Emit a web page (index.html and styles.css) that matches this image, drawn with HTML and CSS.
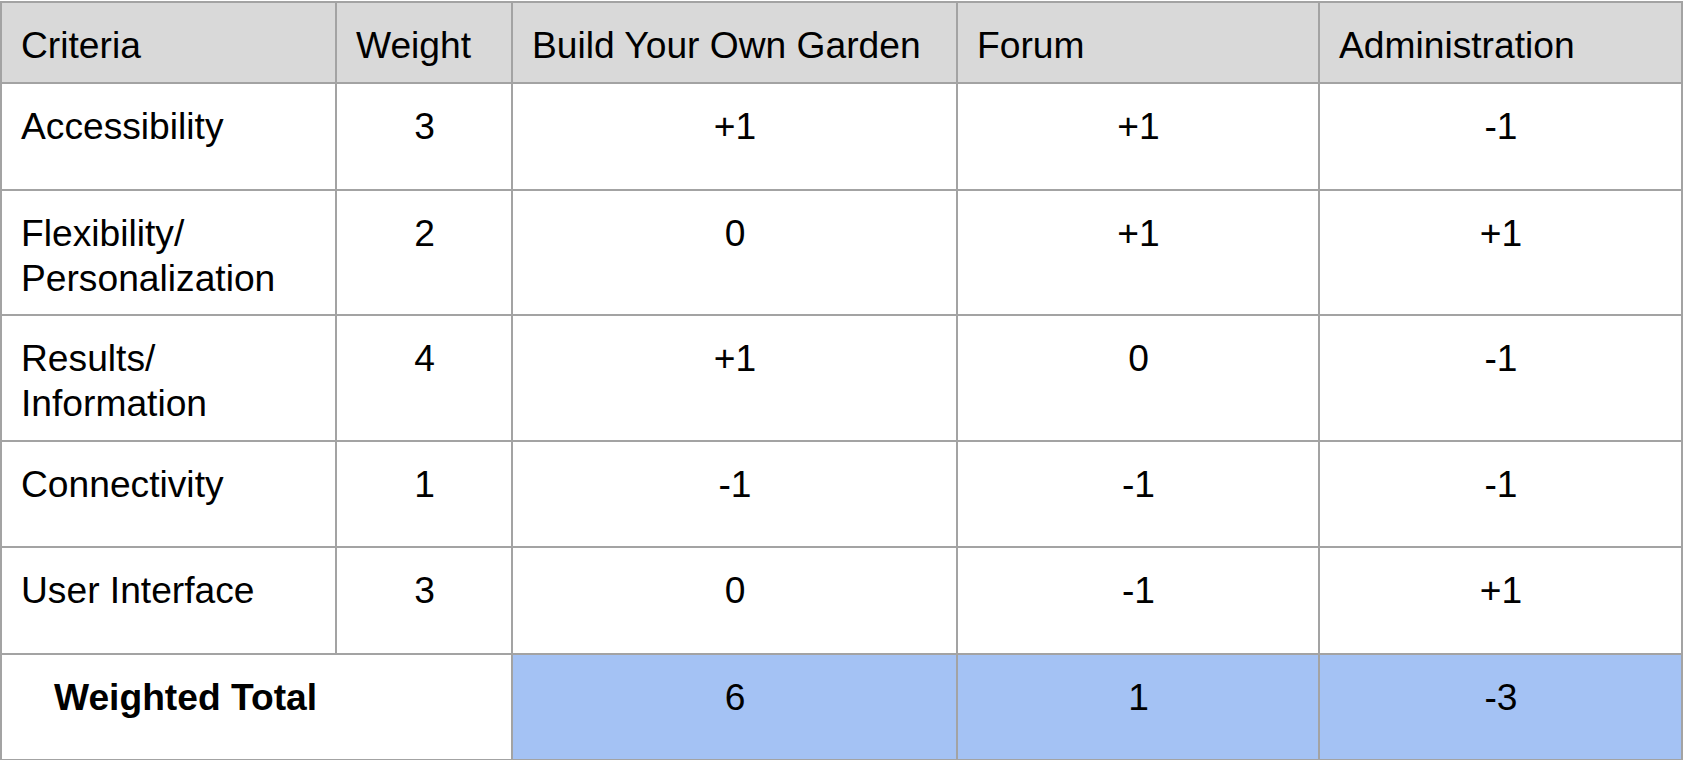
FILE: index.html
```html
<!DOCTYPE html>
<html>
<head>
<meta charset="utf-8">
<link rel="stylesheet" href="styles.css">
</head>
<body>
<table class="matrix">
  <colgroup>
    <col class="c-crit">
    <col class="c-weight">
    <col class="c-garden">
    <col class="c-forum">
    <col class="c-admin">
  </colgroup>
  <thead>
    <tr class="r-head">
      <th>Criteria</th>
      <th>Weight</th>
      <th>Build Your Own Garden</th>
      <th>Forum</th>
      <th>Administration</th>
    </tr>
  </thead>
  <tbody>
    <tr class="r-1">
      <td class="crit">Accessibility</td>
      <td>3</td>
      <td>+1</td>
      <td>+1</td>
      <td>-1</td>
    </tr>
    <tr class="r-2">
      <td class="crit">Flexibility/<br>Personalization</td>
      <td>2</td>
      <td>0</td>
      <td>+1</td>
      <td>+1</td>
    </tr>
    <tr class="r-3">
      <td class="crit">Results/<br>Information</td>
      <td>4</td>
      <td>+1</td>
      <td>0</td>
      <td>-1</td>
    </tr>
    <tr class="r-4">
      <td class="crit">Connectivity</td>
      <td>1</td>
      <td>-1</td>
      <td>-1</td>
      <td>-1</td>
    </tr>
    <tr class="r-5">
      <td class="crit">User Interface</td>
      <td>3</td>
      <td>0</td>
      <td>-1</td>
      <td>+1</td>
    </tr>
    <tr class="r-total">
      <td class="total-label" colspan="2">Weighted Total</td>
      <td class="total">6</td>
      <td class="total">1</td>
      <td class="total">-3</td>
    </tr>
  </tbody>
</table>
</body>
</html>
```
FILE: styles.css
```css
html, body {
  margin: 0;
  padding: 0;
  background: #ffffff;
}

body {
  font-family: "Liberation Sans", Arial, sans-serif;
  font-size: 37.2px;
  color: #000000;
  overflow: hidden;
}

.matrix {
  border-collapse: collapse;
  table-layout: fixed;
  width: 1683px;
  margin: 1px 0 0 0;
}

.c-crit { width: 335px; }
.c-weight { width: 176px; }
.c-garden { width: 445px; }
.c-forum { width: 362px; }
.c-admin { width: 363px; }

.matrix th,
.matrix td {
  border: 2px solid #a3a3a3;
  padding: 20px 18px 0 19px;
  line-height: 45px;
  vertical-align: top;
  font-weight: normal;
}

.matrix th {
  background: #d9d9d9;
  text-align: left;
}

.matrix td {
  text-align: center;
  background: #ffffff;
}

.matrix td.crit {
  text-align: left;
}

.r-head { height: 81px; }
.r-1 { height: 107px; }
.r-2 { height: 125px; }
.r-3 { height: 126px; }
.r-4 { height: 106px; }
.r-5 { height: 107px; }
.r-total { height: 106px; }

.matrix td.total-label {
  text-align: left;
  font-weight: bold;
  padding-left: 52px;
}

.matrix td.total {
  background: #a4c2f4;
}
```
